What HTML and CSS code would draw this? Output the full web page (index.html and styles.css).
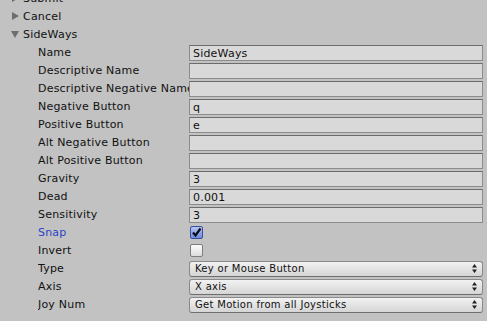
FILE: index.html
```html
<!DOCTYPE html>
<html lang="en">
<head>
    <meta charset="UTF-8">
    <title>Input Manager</title>
    <link rel="stylesheet" href="styles.css">
</head>
<body>
    <div class="inspector">
        <div class="foldout"><span class="arrow closed"></span>Submit</div>
        <div class="foldout"><span class="arrow closed"></span>Cancel</div>
        <div class="foldout"><span class="arrow open"></span>SideWays</div>

        <div class="prop"><div class="label">Name</div><div class="field">SideWays</div></div>
        <div class="prop"><div class="label">Descriptive Name</div><div class="field"></div></div>
        <div class="prop"><div class="label">Descriptive Negative Name</div><div class="field"></div></div>
        <div class="prop"><div class="label">Negative Button</div><div class="field">q</div></div>
        <div class="prop"><div class="label">Positive Button</div><div class="field">e</div></div>
        <div class="prop"><div class="label">Alt Negative Button</div><div class="field"></div></div>
        <div class="prop"><div class="label">Alt Positive Button</div><div class="field"></div></div>
        <div class="prop"><div class="label">Gravity</div><div class="field">3</div></div>
        <div class="prop"><div class="label">Dead</div><div class="field">0.001</div></div>
        <div class="prop"><div class="label">Sensitivity</div><div class="field">3</div></div>
        <div class="prop"><div class="label focused">Snap</div>
            <div class="check checked">
                <svg width="11" height="11" viewBox="0 0 11 11"><path d="M2 5.5 L4.5 8.5 L9.5 1.5" fill="none" stroke="#0a0a20" stroke-width="2.2"/></svg>
            </div>
        </div>
        <div class="prop"><div class="label">Invert</div><div class="check"></div></div>
        <div class="prop"><div class="label">Type</div><div class="popup">Key or Mouse Button<svg class="updown" width="5" height="9" viewBox="0 0 5 9"><path d="M2.5 0 L5 3.5 L0 3.5 Z M2.5 9 L5 5.5 L0 5.5 Z" fill="#222"/></svg></div></div>
        <div class="prop"><div class="label">Axis</div><div class="popup">X axis<svg class="updown" width="5" height="9" viewBox="0 0 5 9"><path d="M2.5 0 L5 3.5 L0 3.5 Z M2.5 9 L5 5.5 L0 5.5 Z" fill="#222"/></svg></div></div>
        <div class="prop"><div class="label">Joy Num</div><div class="popup">Get Motion from all Joysticks<svg class="updown" width="5" height="9" viewBox="0 0 5 9"><path d="M2.5 0 L5 3.5 L0 3.5 Z M2.5 9 L5 5.5 L0 5.5 Z" fill="#222"/></svg></div></div>
    </div>
</body>
</html>
```

FILE: styles.css
```css
body {
    margin: 0;
    padding: 0;
    background: #c2c2c2;
    font-family: 'DejaVu Sans', Verdana, sans-serif;
    font-size: 11px;
    letter-spacing: 0.2px;
    color: #111;
    overflow: hidden;
}
.inspector {
    margin-top: -11px;
    padding-right: 4px;
}
.foldout {
    height: 18px;
    line-height: 18px;
    display: flex;
    align-items: center;
    padding-left: 12px;
    padding-top: 1px;
    box-sizing: border-box;
}
.arrow {
    width: 11px;
    height: 17px;
    display: inline-block;
    position: relative;
}
.arrow.closed::before {
    content: "";
    position: absolute;
    left: 0;
    top: 4px;
    border-left: 7px solid #6e6e6e;
    border-top: 4px solid transparent;
    border-bottom: 4px solid transparent;
}
.arrow.open::before {
    content: "";
    position: absolute;
    left: -1px;
    top: 5px;
    border-top: 7px solid #6e6e6e;
    border-left: 4px solid transparent;
    border-right: 4px solid transparent;
}
.prop {
    height: 18px;
    display: flex;
    align-items: center;
    padding-left: 38px;
}
.label {
    width: 151px;
    flex: none;
    white-space: nowrap;
    overflow: hidden;
    line-height: 16px;
    padding-top: 2px;
}
.label.focused {
    color: #2b43c4;
}
.field {
    flex: 1;
    height: 14px;
    line-height: 15px;
    margin-top: 1px;
    background: #d9d9d9;
    border: 1px solid #8c8c8c;
    border-top-color: #6c6c6c;
    padding-left: 3px;
    white-space: nowrap;
    overflow: hidden;
}
.check {
    width: 11px;
    height: 11px;
    margin-left: 1px;
    border: 1px solid #7d7d7d;
    border-radius: 2px;
    background: linear-gradient(#fbfbfb, #dcdcdc);
    display: flex;
    align-items: center;
    justify-content: center;
}
.check.checked {
    border-color: #3a4f9e;
    background: linear-gradient(#b6c6f2, #6d8ada);
}
.popup {
    flex: 1;
    height: 14px;
    line-height: 14px;
    margin-top: 1px;
    border: 1px solid #8a8a8a;
    border-bottom-color: #6e6e6e;
    border-radius: 3px;
    background: linear-gradient(#f2f2f2, #d5d5d5);
    padding-left: 5px;
    padding-right: 5px;
    display: flex;
    align-items: center;
    justify-content: space-between;
    font-size: 10px;
    letter-spacing: 0.3px;
    white-space: nowrap;
}
.updown {
    flex: none;
}
```
